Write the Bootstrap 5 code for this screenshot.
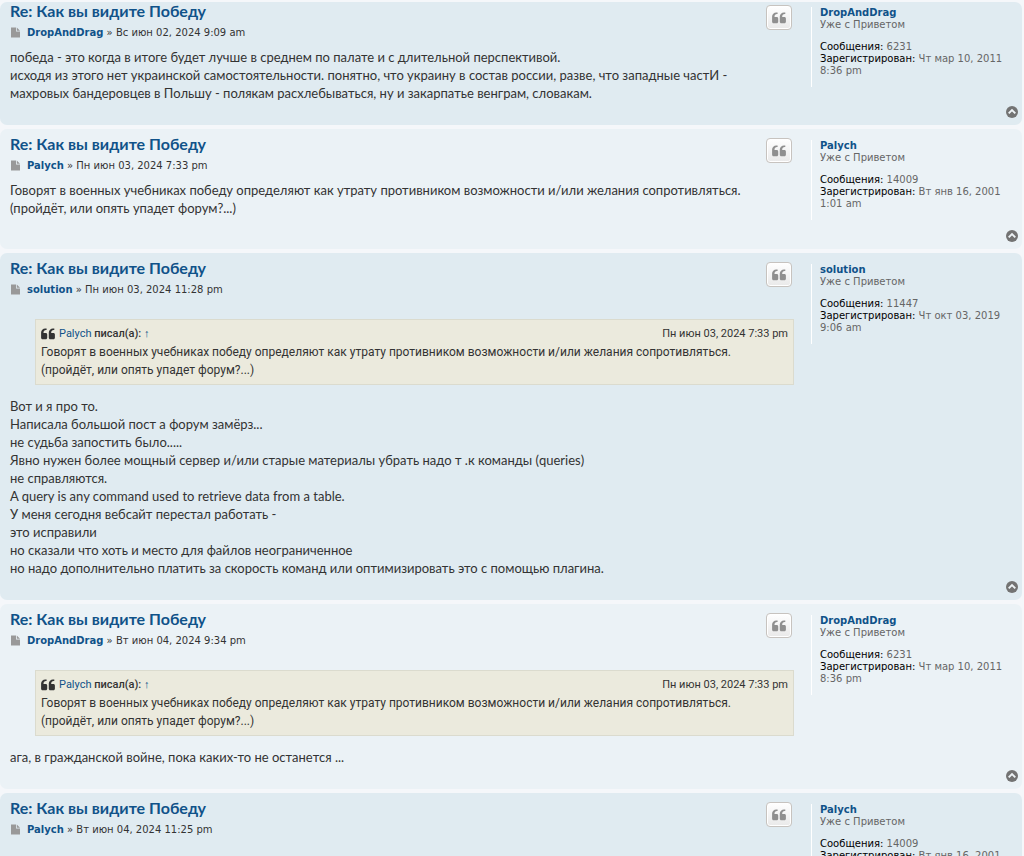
<!DOCTYPE html>
<html lang="ru">
<head>
<meta charset="utf-8">
<meta name="viewport" content="width=device-width, initial-scale=1">
<title>Как вы видите Победу</title>
<link rel="stylesheet" href="https://cdn.jsdelivr.net/npm/bootstrap@5.3.0/dist/css/bootstrap.min.css">
<style>
  body { background: #f5f7fa; color: #333; font: 10px/12px "DejaVu Sans", Verdana, sans-serif; }
  a { color: #105289; text-decoration: none; }
  a:hover { color: #d31141; text-decoration: underline; }
  .topic { padding: 2px 2px 0 0; gap: 4px; }
  .post { border-radius: 7px; padding-left: 10px; background: #ebf2f6; }
  .post-alt { background: #e0ebf1; }
  .post-main { padding: 6px 17px 23px 0; min-width: 0; }
  .post-title { font: bold 16px/18px Lato, "Trebuchet MS", sans-serif; margin: 0; }
  .post-byline { margin-top: 7px; height: 12px; gap: 6px; }
  .post-byline svg { display: block; margin-bottom: 2px; }
  .post-actions { padding: 3px 2px 0 0; }
  .quote-btn { width: 26px; height: 25px; border: 1px solid #c7c3bf; border-radius: 4px; color: #8f8f8f;
    background: linear-gradient(#fff, #e9e9e9); box-shadow: 0 0 0 1px #fff inset; }
  .post-text { font: 13px/18px Lato, "Trebuchet MS", sans-serif; padding-top: 9px; }
  .post-text p { margin: 0; padding-right: 10px; }
  .quote-box { margin: 14px 0 12px 25px; padding: 5px; border: 1px solid #dbdbce; background: #ebeadd;
    font: 12px/18px Roboto, "Trebuchet MS", sans-serif; }
  .quote-head { font-size: 11px; gap: 4px; }
  .quote-head cite { font-style: normal; font-weight: 500; }
  .quote-head a { font-weight: 400; }
  .profile { flex: 0 0 211px; padding: 11px 0 29px; }
  .profile-card { border-left: 1px solid #fff; padding: 0 10px 10px 8px; color: #666; }
  .profile-card dl { margin: 10px 0 0; }
  .profile-card dt { display: inline; font-weight: normal; color: #000; }
  .profile-card dd { display: inline; margin: 0; }
  .to-top { position: absolute; right: 4px; bottom: 7px; color: #737373; line-height: 0; }
  /* the first post sits directly under the top edge */
  .post-first .post-main, .post-first .profile { margin-top: -6px; }
</style>
</head>
<body>
<svg class="d-none" aria-hidden="true">
  <symbol id="i-quote" viewBox="0 0 14 12"><path d="M5.600.400v1.500H5C3.500 1.900 2.500 3 2.500 4.500v.6h2.200C5.600 5.100 6.200 5.700 6.200 6.600v3.200c0 .9-.6 1.500-1.500 1.500H1.600C.7 11.300.1 10.700.1 9.800V4.600C.1 2.300 2 .4 4.300.4zM13.300.4v1.500h-.6c-1.500 0-2.500 1.100-2.500 2.600v.6h2.200c.9 0 1.500.6 1.500 1.500v3.200c0 .9-.6 1.500-1.500 1.500H9.300c-.9 0-1.500-.6-1.500-1.500V4.600C7.800 2.300 9.700.4 12 .4z" fill="currentColor"/></symbol>
  <symbol id="i-file" viewBox="0 0 10 11"><path d="M.5.500h5v4h4v6h-9zM6.300.500l3.200 3.200H6.300z" fill="currentColor"/></symbol>
  <symbol id="i-up" viewBox="0 0 12 12"><circle cx="6" cy="6" r="6" fill="currentColor"/><path d="M2.700 7.400 6 4.100l3.300 3.300" fill="none" stroke="#eef3f6" stroke-width="1.900"/></symbol>
</svg>

<main class="topic d-flex flex-column">

  <article class="post post-alt post-first d-flex position-relative">
    <div class="post-main flex-grow-1">
      <div class="d-flex justify-content-between">
        <div>
          <h3 class="post-title"><a href="#">Re: Как вы видите Победу</a></h3>
          <div class="post-byline d-flex align-items-center"><a href="#" aria-label="Сообщение"><svg width="11" height="11" color="#999"><use href="#i-file"/></svg></a><span><a href="#" class="fw-bold">DropAndDrag</a> » Вс июн 02, 2024 9:09 am</span></div>
        </div>
        <div class="post-actions"><button type="button" class="quote-btn d-flex align-items-center justify-content-center p-0" aria-label="Цитата"><svg width="14" height="12"><use href="#i-quote"/></svg></button></div>
      </div>
      <div class="post-text">
        <p>победа - это когда в итоге будет лучше в среднем по палате и с длительной перспективой.<br>исходя из этого нет украинской самостоятельности. понятно, что украину в состав россии, разве, что западные частИ - махровых бандеровцев в Польшу - полякам расхлебываться, ну и закарпатье венграм, словакам.</p>
      </div>
    </div>
    <aside class="profile">
      <div class="profile-card"><a href="#" class="fw-bold">DropAndDrag</a><div>Уже с Приветом</div>
        <dl><div><dt>Сообщения:</dt> <dd>6231</dd></div><div><dt>Зарегистрирован:</dt> <dd>Чт мар 10, 2011 8:36 pm</dd></div></dl></div>
    </aside>
    <a href="#" class="to-top" aria-label="Вернуться к началу"><svg width="12" height="12"><use href="#i-up"/></svg></a>
  </article>

  <article class="post d-flex position-relative">
    <div class="post-main flex-grow-1">
      <div class="d-flex justify-content-between">
        <div>
          <h3 class="post-title"><a href="#">Re: Как вы видите Победу</a></h3>
          <div class="post-byline d-flex align-items-center"><a href="#" aria-label="Сообщение"><svg width="11" height="11" color="#999"><use href="#i-file"/></svg></a><span><a href="#" class="fw-bold">Palych</a> » Пн июн 03, 2024 7:33 pm</span></div>
        </div>
        <div class="post-actions"><button type="button" class="quote-btn d-flex align-items-center justify-content-center p-0" aria-label="Цитата"><svg width="14" height="12"><use href="#i-quote"/></svg></button></div>
      </div>
      <div class="post-text">
        <p>Говорят в военных учебниках победу определяют как утрату противником возможности и/или желания сопротивляться.<br>(пройдёт, или опять упадет форум?...)</p>
      </div>
    </div>
    <aside class="profile">
      <div class="profile-card"><a href="#" class="fw-bold">Palych</a><div>Уже с Приветом</div>
        <dl><div><dt>Сообщения:</dt> <dd>14009</dd></div><div><dt>Зарегистрирован:</dt> <dd>Вт янв 16, 2001 1:01 am</dd></div></dl></div>
    </aside>
    <a href="#" class="to-top" aria-label="Вернуться к началу"><svg width="12" height="12"><use href="#i-up"/></svg></a>
  </article>

  <article class="post post-alt d-flex position-relative">
    <div class="post-main flex-grow-1">
      <div class="d-flex justify-content-between">
        <div>
          <h3 class="post-title"><a href="#">Re: Как вы видите Победу</a></h3>
          <div class="post-byline d-flex align-items-center"><a href="#" aria-label="Сообщение"><svg width="11" height="11" color="#999"><use href="#i-file"/></svg></a><span><a href="#" class="fw-bold">solution</a> » Пн июн 03, 2024 11:28 pm</span></div>
        </div>
        <div class="post-actions"><button type="button" class="quote-btn d-flex align-items-center justify-content-center p-0" aria-label="Цитата"><svg width="14" height="12"><use href="#i-quote"/></svg></button></div>
      </div>
      <div class="post-text">
        <blockquote class="quote-box">
          <div class="quote-head d-flex align-items-center"><svg width="14" height="12"><use href="#i-quote"/></svg><cite><a href="#">Palych</a> писал(а): <a href="#">↑</a></cite><span class="ms-auto">Пн июн 03, 2024 7:33 pm</span></div>
          Говорят в военных учебниках победу определяют как утрату противником возможности и/или желания сопротивляться.<br>(пройдёт, или опять упадет форум?...)
        </blockquote>
        <p>Вот и я про то.<br>Написала большой пост а форум замёрз...<br>не судьба запостить было.....<br>Явно нужен более мощный сервер и/или старые материалы убрать надо т .к команды (queries)<br>не справляются.<br>A query is any command used to retrieve data from a table.<br>У меня сегодня вебсайт перестал работать -<br>это исправили<br>но сказали что хоть и место для файлов неограниченное<br>но надо дополнительно платить за скорость команд или оптимизировать это с помощью плагина.</p>
      </div>
    </div>
    <aside class="profile">
      <div class="profile-card"><a href="#" class="fw-bold">solution</a><div>Уже с Приветом</div>
        <dl><div><dt>Сообщения:</dt> <dd>11447</dd></div><div><dt>Зарегистрирован:</dt> <dd>Чт окт 03, 2019 9:06 am</dd></div></dl></div>
    </aside>
    <a href="#" class="to-top" aria-label="Вернуться к началу"><svg width="12" height="12"><use href="#i-up"/></svg></a>
  </article>

  <article class="post d-flex position-relative">
    <div class="post-main flex-grow-1">
      <div class="d-flex justify-content-between">
        <div>
          <h3 class="post-title"><a href="#">Re: Как вы видите Победу</a></h3>
          <div class="post-byline d-flex align-items-center"><a href="#" aria-label="Сообщение"><svg width="11" height="11" color="#999"><use href="#i-file"/></svg></a><span><a href="#" class="fw-bold">DropAndDrag</a> » Вт июн 04, 2024 9:34 pm</span></div>
        </div>
        <div class="post-actions"><button type="button" class="quote-btn d-flex align-items-center justify-content-center p-0" aria-label="Цитата"><svg width="14" height="12"><use href="#i-quote"/></svg></button></div>
      </div>
      <div class="post-text">
        <blockquote class="quote-box">
          <div class="quote-head d-flex align-items-center"><svg width="14" height="12"><use href="#i-quote"/></svg><cite><a href="#">Palych</a> писал(а): <a href="#">↑</a></cite><span class="ms-auto">Пн июн 03, 2024 7:33 pm</span></div>
          Говорят в военных учебниках победу определяют как утрату противником возможности и/или желания сопротивляться.<br>(пройдёт, или опять упадет форум?...)
        </blockquote>
        <p>ага, в гражданской войне, пока каких-то не останется ...</p>
      </div>
    </div>
    <aside class="profile">
      <div class="profile-card"><a href="#" class="fw-bold">DropAndDrag</a><div>Уже с Приветом</div>
        <dl><div><dt>Сообщения:</dt> <dd>6231</dd></div><div><dt>Зарегистрирован:</dt> <dd>Чт мар 10, 2011 8:36 pm</dd></div></dl></div>
    </aside>
    <a href="#" class="to-top" aria-label="Вернуться к началу"><svg width="12" height="12"><use href="#i-up"/></svg></a>
  </article>

  <article class="post post-alt d-flex position-relative">
    <div class="post-main flex-grow-1">
      <div class="d-flex justify-content-between">
        <div>
          <h3 class="post-title"><a href="#">Re: Как вы видите Победу</a></h3>
          <div class="post-byline d-flex align-items-center"><a href="#" aria-label="Сообщение"><svg width="11" height="11" color="#999"><use href="#i-file"/></svg></a><span><a href="#" class="fw-bold">Palych</a> » Вт июн 04, 2024 11:25 pm</span></div>
        </div>
        <div class="post-actions"><button type="button" class="quote-btn d-flex align-items-center justify-content-center p-0" aria-label="Цитата"><svg width="14" height="12"><use href="#i-quote"/></svg></button></div>
      </div>
    </div>
    <aside class="profile">
      <div class="profile-card"><a href="#" class="fw-bold">Palych</a><div>Уже с Приветом</div>
        <dl><div><dt>Сообщения:</dt> <dd>14009</dd></div><div><dt>Зарегистрирован:</dt> <dd>Вт янв 16, 2001 1:01 am</dd></div></dl></div>
    </aside>
  </article>

</main>
<script src="https://cdn.jsdelivr.net/npm/bootstrap@5.3.0/dist/js/bootstrap.bundle.min.js"></script>
</body>
</html>
